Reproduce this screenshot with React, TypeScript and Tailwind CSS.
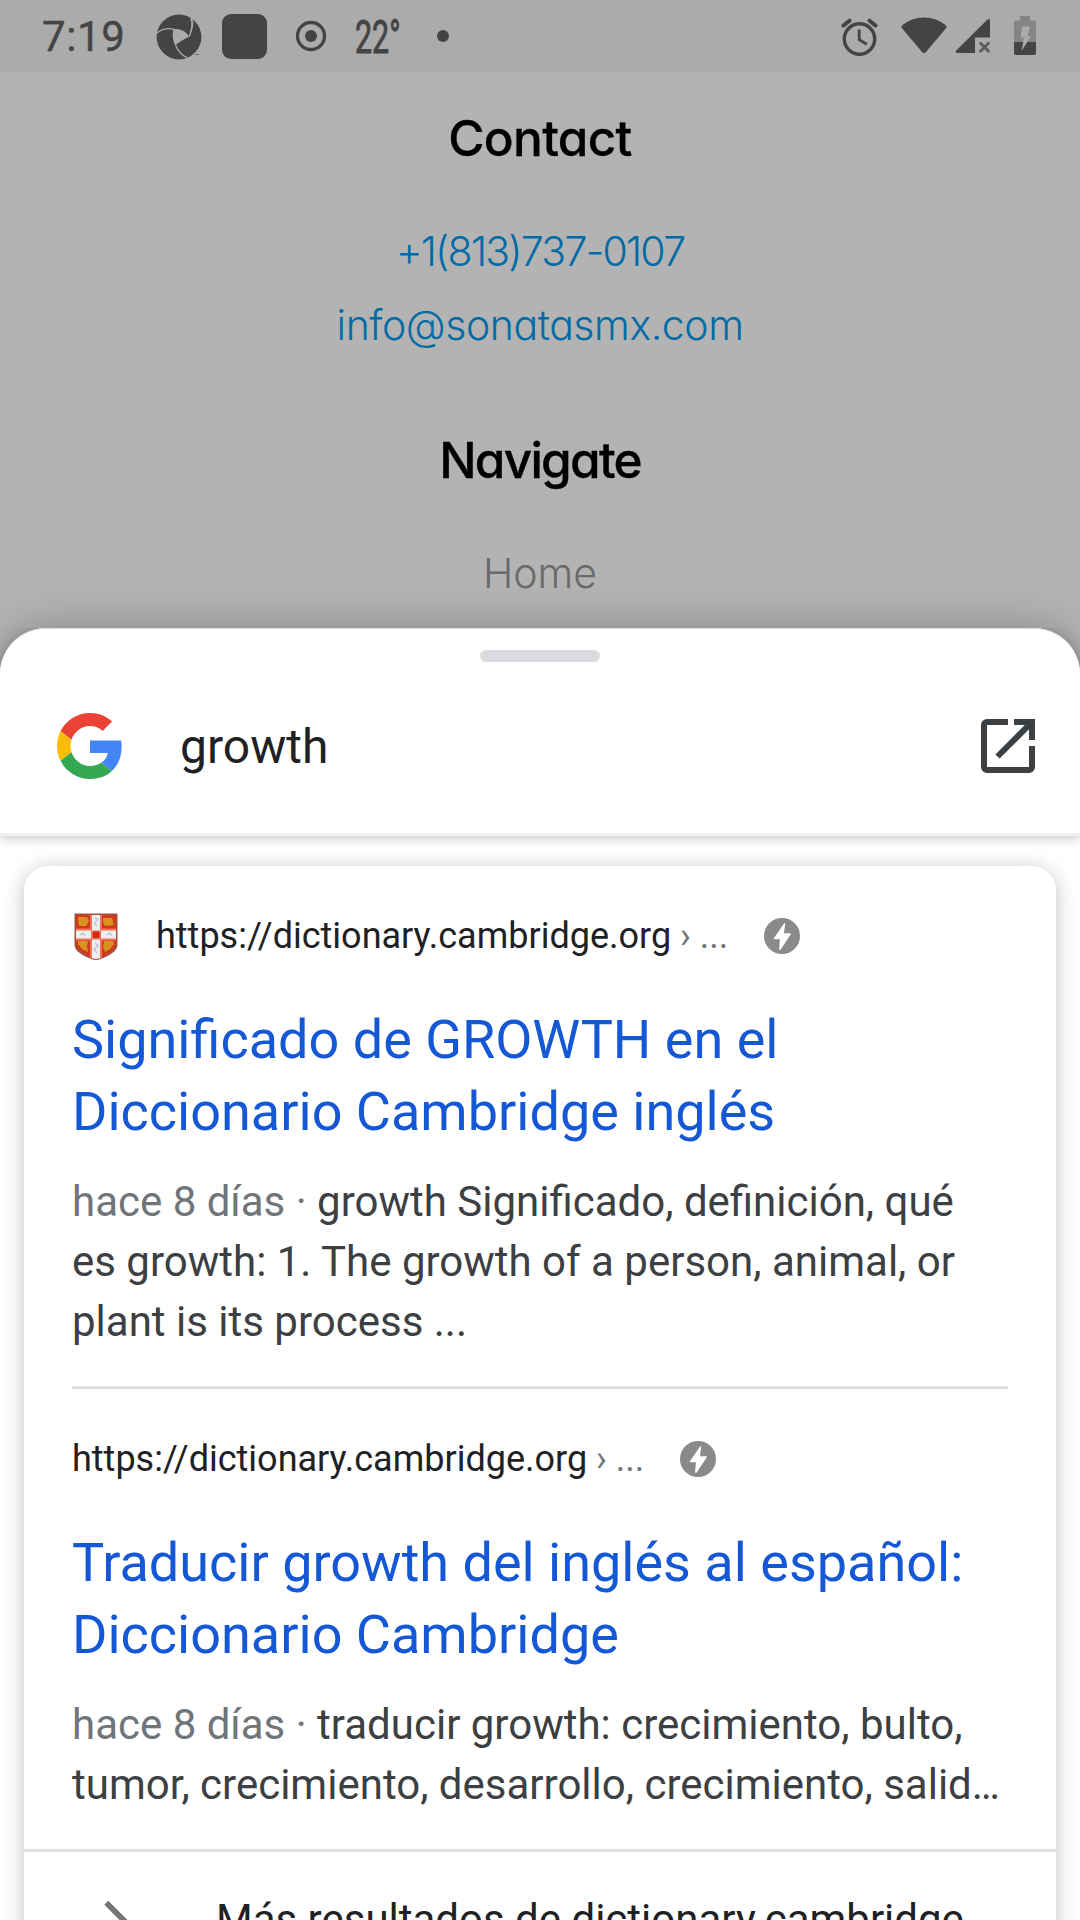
import type { ReactNode } from "react";

function StatusBar() {
  return (
    <header className="flex h-[72px] shrink-0 items-center justify-between bg-[#ababab] text-[#444444]">
      <div className="flex items-center">
        <span className="ml-[42px] w-[83px] pt-px text-[42px] leading-[72px] tracking-[0.6px] [-webkit-text-stroke:0.4px_#444444]">7:19</span>
        <svg className="ml-[31px] mt-px" width="46" height="46" viewBox="0 0 46 46">
          <circle cx="23" cy="23" r="22.4" fill="#444444" />
          <path d="M17.500 15.200C23 14 30 17 33.200 22.500C30 24.500 22 28 19.500 31.500C16.500 27 16 20 17.500 15.200Z" fill="#ababab" />
          <g fill="none" stroke="#ababab" strokeWidth="1.3">
            <path d="M1 19C6 15 12 14 18 15.200" />
            <path d="M33.200 22.500C36 17 37 11 35 4" />
            <path d="M19.500 31C22 38 26 42 34 45" />
          </g>
          <path d="M36.500 4C38.200 9 37 15 33.500 21.500L36 9Z" fill="#ababab" />
          <path d="M38 39L33 46H46V36Z" fill="#ababab" opacity=".6" />
          <rect x="39" y="40" width="4" height="1" fill="#666666" />
        </svg>
        <span className="ml-5 size-[45px] rounded-[9px] bg-[#444444]" />
        <svg className="ml-[28px]" width="32" height="32" viewBox="0 0 32 32">
          <circle cx="16" cy="16" r="13.500" fill="none" stroke="#444444" strokeWidth="3.300" />
          <circle cx="16" cy="16" r="6" fill="#444444" />
        </svg>
        <span className="ml-[28px] w-[49px] origin-left scale-x-[0.66] pt-px text-[46px] leading-[72px] whitespace-nowrap [-webkit-text-stroke:1px_#444444]">22°</span>
        <span className="ml-[33px] size-3 rounded-full bg-[#444444]" />
      </div>
      <div className="mr-[43px] flex items-center">
        <svg className="mt-px" width="38" height="40" viewBox="0 0 38 40">
          <g fill="none" stroke="#444444">
            <circle cx="19.500" cy="22" r="15.200" strokeWidth="3.400" />
            <path d="M19.200 12.500v10.200l7.600 4.500" strokeWidth="2.800" />
            <path d="M3.500 8.500L9.500 3.700M29.500 3.700L35.500 8.500" strokeWidth="4" strokeLinecap="round" />
          </g>
        </svg>
        <svg className="ml-[22px]" width="48" height="40" viewBox="0 0 48 40">
          <path d="M2 9.500C14 -1.200 34 -1.200 46 9.500Q47 11 46 12.200L26 36Q24 38 22 36L2 12.200Q1 11 2 9.500Z" fill="#444444" />
        </svg>
        <svg className="ml-[7px]" width="36" height="38" viewBox="0 0 36 38">
          <path d="M2.500 36Q0 35.500 1 33.800L32.500 2.500Q35 1 35 4V20.500H20V36Z" fill="#444444" />
          <path d="M25.500 26.200l8 8M33.500 26.200l-8 8" stroke="#5c5c5c" strokeWidth="2.800" strokeLinecap="round" />
        </svg>
        <svg className="ml-[22px]" width="24" height="40" viewBox="0 0 24 40">
          <path d="M7 0h10v4.500h4q2 0 2 2V27H1V6.500q0-2 2-2h4z" fill="#858585" />
          <path d="M1 26h22v11q0 2-2 2H3q-2 0-2-2z" fill="#444444" />
          <path d="M9 10.500h8L14.500 20H18L8.500 35l2.500-13.500H7.500z" fill="#ababab" />
        </svg>
      </div>
    </header>
  );
}

function GoogleLogo() {
  return (
    <svg className="size-[66px]" viewBox="0 0 48 48">
      <path fill="#EA4335" d="M24 9.500c3.540 0 6.710 1.220 9.210 3.600l6.850-6.850C35.900 2.380 30.470 0 24 0 14.620 0 6.510 5.380 2.560 13.220l7.980 6.190C12.430 13.720 17.740 9.500 24 9.500z" />
      <path fill="#4285F4" d="M46.980 24.550c0-1.570-.15-3.090-.38-4.550H24v9.020h12.940c-.58 2.960-2.260 5.480-4.780 7.180l7.730 6c4.510-4.180 7.090-10.360 7.090-17.650z" />
      <path fill="#FBBC05" d="M10.530 28.590c-.48-1.450-.76-2.990-.76-4.590s.27-3.140.76-4.590l-7.980-6.190C.92 16.460 0 20.120 0 24c0 3.880.92 7.540 2.560 10.780l7.970-6.190z" />
      <path fill="#34A853" d="M24 48c6.480 0 11.930-2.130 15.890-5.810l-7.730-6c-2.150 1.450-4.920 2.300-8.160 2.300-6.260 0-11.570-4.220-13.470-9.910l-7.980 6.190C6.510 42.620 14.620 48 24 48z" />
    </svg>
  );
}

function OpenInNew() {
  return (
    <svg className="size-[54px]" viewBox="0 0 18 18" fill="#3c4043">
      <path d="M9 0v2H2v14h14V9h2v7a2 2 0 0 1-2 2H2a2 2 0 0 1-2-2V2a2 2 0 0 1 2-2z" />
      <path d="M11 0h7v7h-2V3.400L6.200 13.200 4.800 11.800 14.600 2H11z" />
    </svg>
  );
}

function Crest() {
  return (
    <svg className="size-12" viewBox="0 0 48 48">
      <path d="M2.500 1.500H45.500V33Q45 42 24 48.500Q3 42 2.500 33Z" fill="#a3503c" />
      <path d="M4 3H44V33Q43 40.500 24 46.500Q5 40.500 4 33Z" fill="#cf3a1c" />
      <g fill="#d9921f">
        <path d="M6 5h9l2 4-3 5H7z" />
        <path d="M31 6h9l2 7-9 1-2-4z" />
        <path d="M6 29h10l-1 5 1 6-6-3-4-5z" />
        <path d="M32 29h9l1 3-4 5-5 3-2-5z" />
      </g>
      <path d="M18 3h12v43l-6 1.500-6-1.500zM4 16.500h40v12H4z" fill="#f6705c" />
      <path d="M20 3h8v43l-4 1-4-1zM4 18.500h40v8H4z" fill="#eceff0" />
      <path d="M23 5l3 3-4 3 3 3M23 31l3 3-4 3 3 4M8 23l3-2 2 3M35 23l3-2 2 3" fill="none" stroke="#b9c6c9" strokeWidth="1.300" />
      <rect x="19" y="18.500" width="10" height="9" fill="#f6705c" />
      <rect x="21" y="19.500" width="6.500" height="6.500" fill="#cf2f12" />
    </svg>
  );
}

function AmpIcon() {
  return (
    <svg className="ml-9 size-9" viewBox="0 0 36 36">
      <circle cx="18" cy="18" r="18" fill="#8a8a8a" />
      <path d="M20.300 5.200L9.800 20.300Q9.500 21.300 10.400 21.300H16L15 31.500Q15.700 32.400 17 31L26.800 16.300Q27 15.300 26.200 15.200H20L21.200 5.500Q20.800 4.700 20.300 5.200Z" fill="#ffffff" />
    </svg>
  );
}

function Result({ icon, title, children }: { icon?: ReactNode; title: string[]; children: ReactNode }) {
  return (
    <article className="px-12">
      <div className="flex h-12 items-center text-[36px] leading-[48px] whitespace-nowrap text-[#202124]">
        {icon && <span className="mr-9">{icon}</span>}
        <span>
          https://dictionary.cambridge.org<span className="text-[#70757a]"> › ...</span>
        </span>
        <AmpIcon />
      </div>
      <h3 className="mt-11 text-[54px] leading-[72px] whitespace-nowrap text-[#1558d6]">
        {title.map((line) => (
          <span key={line} className="block">{line}</span>
        ))}
      </h3>
      <p className="mt-6 text-[42px] leading-[60px] whitespace-nowrap text-[#3c4043]">{children}</p>
    </article>
  );
}

export default function App() {
  return (
    <div className="flex h-[1920px] w-[1080px] flex-col overflow-hidden bg-[#b3b3b3] font-['Roboto',sans-serif]">
      <StatusBar />

      <section className="flex h-[556px] shrink-0 flex-col items-center pt-[36px] font-['Inter',sans-serif] text-[41px] leading-[60px] font-light [font-feature-settings:'cv11']">
        <h2 className="text-[49.5px] font-medium tracking-[-0.7px] text-black [-webkit-text-stroke:0.3px_#000000]">Contact</h2>
        <a className="mt-[53px] tracking-[-1.76px] text-[#006ba6]">+1(813)737-0107</a>
        <a className="mt-[14px] tracking-[-0.45px] text-[#006ba6]">info@sonatasmx.com</a>
        <h2 className="mt-[75px] text-[49.5px] font-medium tracking-[-1.75px] text-black [-webkit-text-stroke:0.3px_#000000]">Navigate</h2>
        <a className="mt-[53px] text-[#6a6a6a]">Home</a>
      </section>

      <main className="flex h-[1292px] shrink-0 flex-col rounded-t-[46px] bg-white shadow-[0_0_40px_rgba(0,0,0,0.25)]">
        <div className="relative z-10 flex h-[208px] shrink-0 flex-col rounded-t-[46px] border-t border-t-[#dddddd] border-b-[3px] border-b-[#f0f2f1] bg-white shadow-[0_2px_12px_rgba(0,0,0,0.24)] [clip-path:inset(0_0_-30px_0)]">
          <div className="mt-[21px] h-3 w-[120px] self-center rounded-full bg-[#dadce0]" />
          <div className="mt-[50px] flex items-center pr-[45px] pl-[57px]">
            <GoogleLogo />
            <span className="ml-[57px] grow pt-0.5 text-[48px] leading-[66px] text-[#202124]">growth</span>
            <OpenInNew />
          </div>
        </div>

        <div className="mx-6 mt-[30px] h-[1200px] shrink-0 rounded-t-[24px] bg-white pt-[46px] shadow-[0_3px_20px_rgba(32,33,36,0.28)]">
          <Result icon={<Crest />} title={["Significado de GROWTH en el", "Diccionario Cambridge inglés"]}>
            <span className="text-[#70757a]">hace 8 días · </span>growth Significado, definición, qué
            <br />
            es growth: 1. The growth of a person, animal, or
            <br />
            plant is its process ...
          </Result>
          <div className="mx-12 mt-[34px] mb-[46px] h-[3px] border-t border-[#ebebee] bg-[#dadce0]" />
          <Result title={["Traducir growth del inglés al español:", "Diccionario Cambridge"]}>
            <span className="text-[#70757a]">hace 8 días · </span>traducir growth: crecimiento, bulto,
            <br />
            tumor, crecimiento, desarrollo, crecimiento, salid…
          </Result>
          <div className="mt-[34px] flex items-center border-t-[3px] border-[#dfe0e6] pt-8 pl-[54px]">
            <svg className="size-[72px] shrink-0" viewBox="0 0 72 72" fill="none">
              <path d="M28.300 18.800L51.500 42L28.300 65.200" stroke="#757575" strokeWidth="5.600" />
            </svg>
            <span className="ml-[66px] text-[42px] leading-[60px] whitespace-nowrap text-[#202124]">
              Más resultados de dictionary.cambridge
            </span>
          </div>
        </div>
      </main>
    </div>
  );
}
